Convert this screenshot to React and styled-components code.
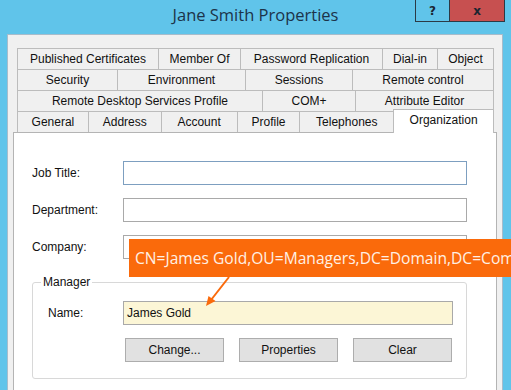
import React from 'react'
import styled, { createGlobalStyle } from 'styled-components'

const Global = createGlobalStyle`
body{
  margin:0;
  overflow:hidden;
  font-family:"Liberation Sans", Arial, sans-serif;
}
`;

const Window = styled.div`
position:relative;
width:511px;
height:390px;
overflow:hidden;
background:#60c4ea;
display:flex;
flex-direction:column;
`;
const TitleBar = styled.div`
height:34px;
flex-shrink:0;
display:grid;
grid-template-columns:1fr auto 1fr;
align-items:start;
`;
const Title = styled.div`
grid-column:2;
font-family:"Open Sans", sans-serif;
font-size:16.5px;
line-height:30px;
color:#1c3349;
white-space:nowrap;
`;
const Controls = styled.div`
justify-self:end;
display:flex;
margin-right:6px;
`;
const CtrlButton = styled.div`
width:${p => p.$w}px;
height:22px;
box-sizing:border-box;
border:1px solid #2b3a46;
border-top:none;
margin-left:-1px;
background:${p => p.$close ? '#c75050' : '#60c4ea'};
display:flex;
align-items:center;
justify-content:center;
font-family:"DejaVu Sans", sans-serif;
font-weight:bold;
font-size:12px;
color:#1b2530;
`;
const Dialog = styled.div`
flex:1;
margin:0 8px 0 7px;
background:#f0f0f0;
border:1px solid #a7bccb;
border-bottom:none;
padding:13px 5px 0;
display:flex;
flex-direction:column;
`;
const TabStrip = styled.div`
display:flex;
flex-direction:column;
padding:0 3px 0 4px;
`;
const TabRow = styled.div`
display:flex;
height:21px;
`;
const Tab = styled.div`
box-sizing:border-box;
width:${p => p.$w}px;
height:${p => p.$active ? 24 : 21}px;
margin-top:${p => p.$active ? -2 : 0}px;
margin-left:-1px;
&:first-child{margin-left:0;}
border:1px solid #bcbcbc;
border-bottom:none;
background:${p => p.$active ? '#ffffff' : '#f0f0f0'};
position:relative;
z-index:${p => p.$active ? 1 : 0};
display:flex;
align-items:center;
justify-content:center;
padding-bottom:${p => p.$active ? 3 : 0}px;
font-size:12px;
color:#111;
white-space:nowrap;
`;
const Panel = styled.div`
flex:1;
background:#fff;
border:1px solid #b4b4b4;
border-bottom:none;
padding:28px 29px 0 18px;
display:flex;
flex-direction:column;
gap:13px;
`;
const FieldRow = styled.div`
display:grid;
grid-template-columns:91px 1fr;
align-items:center;
height:24px;
`;
const Label = styled.label`
font-size:12px;
color:#111;
`;
const Input = styled.div`
box-sizing:border-box;
height:24px;
border:1px solid ${p => p.$focus ? '#7d9fc0' : '#a9a9a9'};
background:${p => p.$yellow ? '#fcf6d6' : '#fff'};
font-size:12px;
color:#111;
display:flex;
align-items:center;
padding-left:3px;
`;
const Group = styled.fieldset`
margin:3px 0 0;
padding:0;
border:1px solid #d8d8d8;
border-radius:3px;
min-width:0;
`;
const Legend = styled.legend`
margin-left:8px;
padding:0 2px;
font-size:12px;
line-height:14px;
color:#111;
`;
const GroupBody = styled.div`
display:grid;
grid-template-columns:75px 330px;
row-gap:13px;
padding:12px 13px 16px 15px;
align-items:center;
`;
const ButtonRow = styled.div`
grid-column:2;
display:flex;
justify-content:space-between;
padding:0 1px 0 2px;
`;
const Button = styled.div`
box-sizing:border-box;
width:99px;
height:24px;
background:#e1e1e1;
border:1px solid #adadad;
display:flex;
align-items:center;
justify-content:center;
font-size:12px;
color:#111;
`;
const Callout = styled.div`
position:absolute;
left:129px;
top:239px;
width:420px;
height:38px;
background:#fa6a0b;
color:#fff0e4;
font-family:"Open Sans", sans-serif;
font-size:15.6px;
line-height:38px;
padding-left:6px;
white-space:nowrap;
`;
const Arrow = styled.svg`
position:absolute;
left:200px;
top:274px;
`;

const rows = [
  [['Published Certificates', 142], ['Member Of', 83], ['Password Replication', 143], ['Dial-in', 56], ['Object', 57]],
  [['Security', 101], ['Environment', 129], ['Sessions', 108], ['Remote control', 142]],
  [['Remote Desktop Services Profile', 246], ['COM+', 94], ['Attribute Editor', 139]],
  [['General', 72], ['Address', 74], ['Account', 77], ['Profile', 64], ['Telephones', 95], ['Organization', 101]],
];

function App() {
  return (
    <Window>
      <Global />
      <TitleBar>
        <Title>Jane Smith Properties</Title>
        <Controls>
          <CtrlButton $w={35}>?</CtrlButton>
          <CtrlButton $w={56} $close>x</CtrlButton>
        </Controls>
      </TitleBar>
      <Dialog>
        <TabStrip>
          {rows.map((row, i) => (
            <TabRow key={i}>
              {row.map(([name, w]) => (
                <Tab key={name} $w={w} $active={name === 'Organization'}>{name}</Tab>
              ))}
            </TabRow>
          ))}
        </TabStrip>
        <Panel>
          <FieldRow>
            <Label>Job Title:</Label>
            <Input $focus />
          </FieldRow>
          <FieldRow>
            <Label>Department:</Label>
            <Input />
          </FieldRow>
          <FieldRow>
            <Label>Company:</Label>
            <Input />
          </FieldRow>
          <Group>
            <Legend>Manager</Legend>
            <GroupBody>
              <Label>Name:</Label>
              <Input $yellow>James Gold</Input>
              <ButtonRow>
                <Button>Change...</Button>
                <Button>Properties</Button>
                <Button>Clear</Button>
              </ButtonRow>
            </GroupBody>
          </Group>
        </Panel>
      </Dialog>
      <Callout>CN=James Gold,OU=Managers,DC=Domain,DC=Com</Callout>
      <Arrow width="40" height="40" viewBox="0 0 40 40">
        <line x1="29" y1="3" x2="11" y2="26" stroke="#fa6a0b" strokeWidth="2" />
        <polygon points="6,32 8.5,22 15.5,27" fill="#fa6a0b" />
      </Arrow>
    </Window>
  );
}

export default App
